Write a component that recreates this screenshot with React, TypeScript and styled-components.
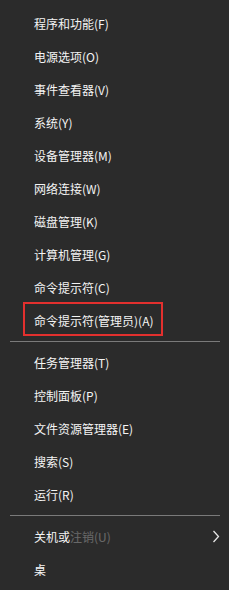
import React from "react";
import styled, { createGlobalStyle } from "styled-components";

const Global = createGlobalStyle`
  html, body { margin: 0; padding: 0; background: #2b2b2b; }
  body { width: 229px; height: 590px; overflow: hidden; }
`;

const Menu = styled.div`
  display: flex;
  flex-direction: column;
  width: 229px;
  height: 590px;
  padding-top: 7px;
  box-sizing: border-box;
  background: #2b2b2b;
  font-family: "Microsoft YaHei", "Noto Sans CJK SC", "Liberation Sans", sans-serif;
  font-size: 12px;
  color: #f4f4f4;
`;

const Row = styled.div`
  position: relative;
  display: flex;
  align-items: center;
  height: 33px;
  padding-left: 34px;
  padding-right: 9px;
  box-sizing: border-box;
`;

const Label = styled.span`
  flex: 1;
  white-space: nowrap;
  line-height: 1;
`;

const Faded = styled.span<{ $o: number }>`
  opacity: ${(p) => p.$o};
`;

const Highlight = styled.div`
  position: absolute;
  left: 23px;
  top: -2px;
  width: 140px;
  height: 34px;
  border: 2px solid #e3302e;
  box-sizing: border-box;
  pointer-events: none;
`;

const Separator = styled.div`
  height: 1px;
  margin: 4px 9px 4px 10px;
  background: #7a7a7a;
`;

const Chevron = () => (
  <svg width="8" height="13" viewBox="0 0 8 13">
    <polyline points="1.5,1 6.5,6.5 1.5,12" fill="none" stroke="#e6e6e6" strokeWidth="1.3" />
  </svg>
);

const group1 = [
  "程序和功能(F)",
  "电源选项(O)",
  "事件查看器(V)",
  "系统(Y)",
  "设备管理器(M)",
  "网络连接(W)",
  "磁盘管理(K)",
  "计算机管理(G)",
  "命令提示符(C)",
];

const group2 = ["任务管理器(T)", "控制面板(P)", "文件资源管理器(E)", "搜索(S)", "运行(R)"];

export default function App() {
  return (
    <>
      <Global />
      <Menu>
        {group1.map((t) => (
          <Row key={t}>
            <Label>{t}</Label>
          </Row>
        ))}
        <Row>
          <Label>命令提示符(管理员)(A)</Label>
          <Highlight />
        </Row>
        <Separator />
        {group2.map((t) => (
          <Row key={t}>
            <Label>{t}</Label>
          </Row>
        ))}
        <Separator />
        <Row>
          <Label>
            关机或<Faded $o={0.3}>注销(U)</Faded>
          </Label>
          <Chevron />
        </Row>
        <Row>
          <Label>
            桌<Faded $o={0}>面(D)</Faded>
          </Label>
        </Row>
      </Menu>
    </>
  );
}
